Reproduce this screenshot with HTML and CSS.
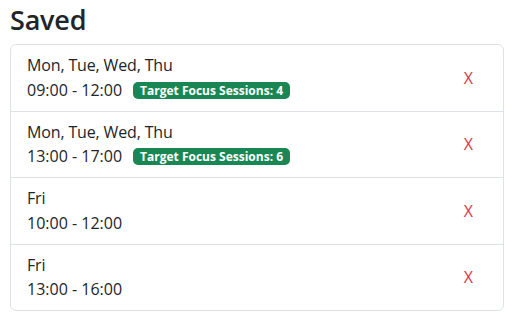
FILE: index.html
```html
<!DOCTYPE html>
<html>
<head>
<meta charset="utf-8">
<link rel="stylesheet" href="styles.css">
</head>
<body>
<h2 class="title">Saved</h2>
<ul class="list">
  <li class="item">
    <div class="info">
      <div class="days">Mon, Tue, Wed, Thu</div>
      <div class="time">09:00 - 12:00 <span class="badge">Target Focus Sessions: 4</span></div>
    </div>
    <button class="remove">X</button>
  </li>
  <li class="item">
    <div class="info">
      <div class="days">Mon, Tue, Wed, Thu</div>
      <div class="time">13:00 - 17:00 <span class="badge">Target Focus Sessions: 6</span></div>
    </div>
    <button class="remove">X</button>
  </li>
  <li class="item">
    <div class="info">
      <div class="days">Fri</div>
      <div class="time">10:00 - 12:00</div>
    </div>
    <button class="remove">X</button>
  </li>
  <li class="item">
    <div class="info">
      <div class="days">Fri</div>
      <div class="time">13:00 - 16:00</div>
    </div>
    <button class="remove">X</button>
  </li>
</ul>
</body>
</html>
```
FILE: styles.css
```css
html, body {
  margin: 0;
  padding: 0;
  background: #ffffff;
}
body {
  padding: 0 8px 0 10px;
  font-family: "Open Sans", "Noto Sans", sans-serif;
  color: #212529;
  font-size: 16px;
}
.title {
  margin: 0;
  padding-top: 2px;
  height: 42px;
  font-size: 27px;
  font-weight: 600;
  line-height: 36px;
  letter-spacing: -0.2px;
}
.list {
  list-style: none;
  margin: 0;
  padding: 0;
  border: 1px solid #dee2e6;
  border-radius: 6px;
}
.item {
  display: flex;
  align-items: center;
  justify-content: space-between;
  padding: 8px 16px;
  line-height: 24.75px;
}
.item + .item {
  border-top: 1px solid #dee2e6;
}
.days {
  letter-spacing: -0.15px;
}
.time {
  display: flex;
  align-items: center;
  gap: 11px;
}
.badge {
  display: inline-block;
  background: #198754;
  color: #fff;
  font-size: 12px;
  font-weight: 700;
  line-height: 17px;
  padding: 0 7px;
  border-radius: 5px;
}
.remove {
  border: 0;
  background: none;
  color: #dc3545;
  font-family: "Open Sans", "Noto Sans", sans-serif;
  font-size: 16px;
  padding: 0;
  margin-right: 14px;
}
```
